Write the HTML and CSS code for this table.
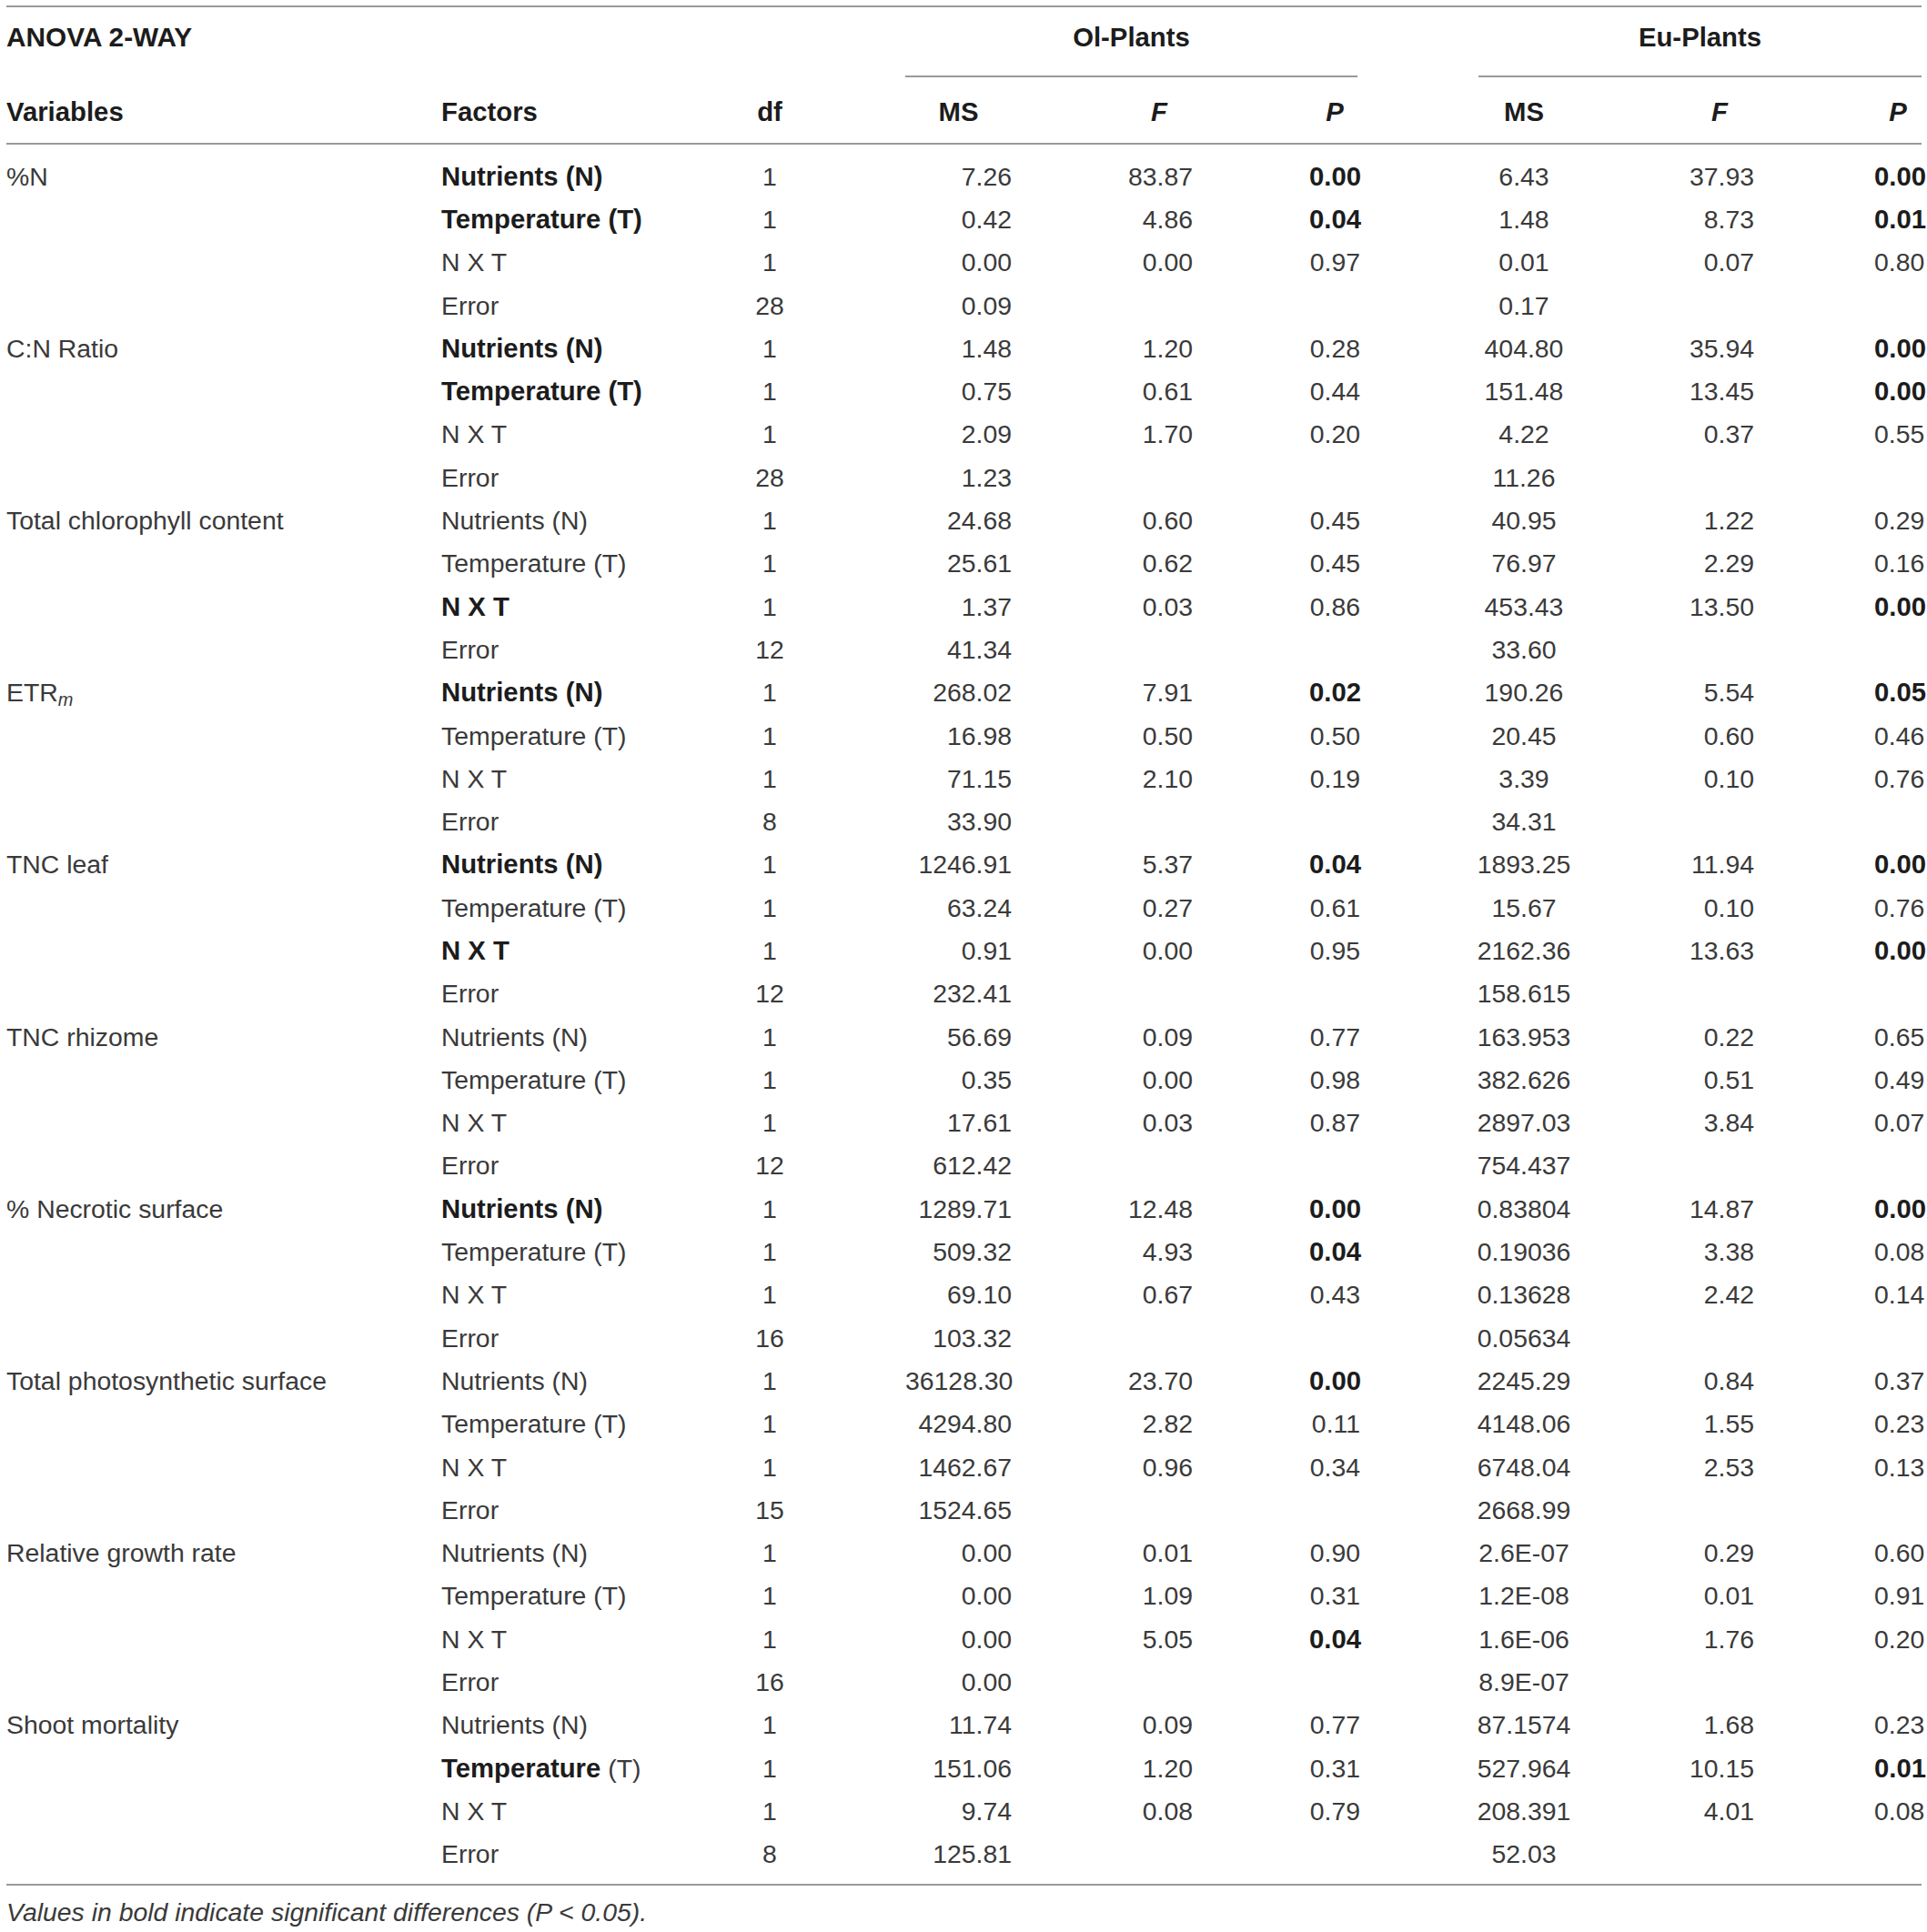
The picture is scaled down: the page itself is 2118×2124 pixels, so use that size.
FILE: index.html
```html
<!DOCTYPE html>
<html lang="en">
<head>
    <meta charset="UTF-8">
    <meta name="viewport" content="width=device-width, initial-scale=1.0">
    <title>ANOVA 2-way</title>
    <link rel="stylesheet" href="styles.css">
</head>
<body>
    <div class="table">
        <div class="head1">
            <b class="title">ANOVA 2-WAY</b>
            <span></span>
            <span></span>
            <div class="group ol"><b>Ol-Plants</b></div>
            <div class="group eu"><b>Eu-Plants</b></div>
        </div>
        <div class="head2">
            <b>Variables</b>
            <b>Factors</b>
            <b>df</b>
            <b>MS</b>
            <b><i>F</i></b>
            <b><i>P</i></b>
            <b>MS</b>
            <b><i>F</i></b>
            <b><i>P</i></b>
        </div>
        <div class="body">
            <div class="row"><span>%N</span><b>Nutrients (N)</b><span>1</span><span>7.26</span><span>83.87</span><b>0.00</b><span>6.43</span><span>37.93</span><b>0.00</b></div>
            <div class="row"><span></span><b>Temperature (T)</b><span>1</span><span>0.42</span><span>4.86</span><b>0.04</b><span>1.48</span><span>8.73</span><b>0.01</b></div>
            <div class="row"><span></span><span>N X T</span><span>1</span><span>0.00</span><span>0.00</span><span>0.97</span><span>0.01</span><span>0.07</span><span>0.80</span></div>
            <div class="row"><span></span><span>Error</span><span>28</span><span>0.09</span><span></span><span></span><span>0.17</span><span></span><span></span></div>

            <div class="row"><span>C:N Ratio</span><b>Nutrients (N)</b><span>1</span><span>1.48</span><span>1.20</span><span>0.28</span><span>404.80</span><span>35.94</span><b>0.00</b></div>
            <div class="row"><span></span><b>Temperature (T)</b><span>1</span><span>0.75</span><span>0.61</span><span>0.44</span><span>151.48</span><span>13.45</span><b>0.00</b></div>
            <div class="row"><span></span><span>N X T</span><span>1</span><span>2.09</span><span>1.70</span><span>0.20</span><span>4.22</span><span>0.37</span><span>0.55</span></div>
            <div class="row"><span></span><span>Error</span><span>28</span><span>1.23</span><span></span><span></span><span>11.26</span><span></span><span></span></div>

            <div class="row"><span>Total chlorophyll content</span><span>Nutrients (N)</span><span>1</span><span>24.68</span><span>0.60</span><span>0.45</span><span>40.95</span><span>1.22</span><span>0.29</span></div>
            <div class="row"><span></span><span>Temperature (T)</span><span>1</span><span>25.61</span><span>0.62</span><span>0.45</span><span>76.97</span><span>2.29</span><span>0.16</span></div>
            <div class="row"><span></span><b>N X T</b><span>1</span><span>1.37</span><span>0.03</span><span>0.86</span><span>453.43</span><span>13.50</span><b>0.00</b></div>
            <div class="row"><span></span><span>Error</span><span>12</span><span>41.34</span><span></span><span></span><span>33.60</span><span></span><span></span></div>

            <div class="row"><span>ETR<sub><i>m</i></sub></span><b>Nutrients (N)</b><span>1</span><span>268.02</span><span>7.91</span><b>0.02</b><span>190.26</span><span>5.54</span><b>0.05</b></div>
            <div class="row"><span></span><span>Temperature (T)</span><span>1</span><span>16.98</span><span>0.50</span><span>0.50</span><span>20.45</span><span>0.60</span><span>0.46</span></div>
            <div class="row"><span></span><span>N X T</span><span>1</span><span>71.15</span><span>2.10</span><span>0.19</span><span>3.39</span><span>0.10</span><span>0.76</span></div>
            <div class="row"><span></span><span>Error</span><span>8</span><span>33.90</span><span></span><span></span><span>34.31</span><span></span><span></span></div>

            <div class="row"><span>TNC leaf</span><b>Nutrients (N)</b><span>1</span><span>1246.91</span><span>5.37</span><b>0.04</b><span>1893.25</span><span>11.94</span><b>0.00</b></div>
            <div class="row"><span></span><span>Temperature (T)</span><span>1</span><span>63.24</span><span>0.27</span><span>0.61</span><span>15.67</span><span>0.10</span><span>0.76</span></div>
            <div class="row"><span></span><b>N X T</b><span>1</span><span>0.91</span><span>0.00</span><span>0.95</span><span>2162.36</span><span>13.63</span><b>0.00</b></div>
            <div class="row"><span></span><span>Error</span><span>12</span><span>232.41</span><span></span><span></span><span>158.615</span><span></span><span></span></div>

            <div class="row"><span>TNC rhizome</span><span>Nutrients (N)</span><span>1</span><span>56.69</span><span>0.09</span><span>0.77</span><span>163.953</span><span>0.22</span><span>0.65</span></div>
            <div class="row"><span></span><span>Temperature (T)</span><span>1</span><span>0.35</span><span>0.00</span><span>0.98</span><span>382.626</span><span>0.51</span><span>0.49</span></div>
            <div class="row"><span></span><span>N X T</span><span>1</span><span>17.61</span><span>0.03</span><span>0.87</span><span>2897.03</span><span>3.84</span><span>0.07</span></div>
            <div class="row"><span></span><span>Error</span><span>12</span><span>612.42</span><span></span><span></span><span>754.437</span><span></span><span></span></div>

            <div class="row"><span>% Necrotic surface</span><b>Nutrients (N)</b><span>1</span><span>1289.71</span><span>12.48</span><b>0.00</b><span>0.83804</span><span>14.87</span><b>0.00</b></div>
            <div class="row"><span></span><span>Temperature (T)</span><span>1</span><span>509.32</span><span>4.93</span><b>0.04</b><span>0.19036</span><span>3.38</span><span>0.08</span></div>
            <div class="row"><span></span><span>N X T</span><span>1</span><span>69.10</span><span>0.67</span><span>0.43</span><span>0.13628</span><span>2.42</span><span>0.14</span></div>
            <div class="row"><span></span><span>Error</span><span>16</span><span>103.32</span><span></span><span></span><span>0.05634</span><span></span><span></span></div>

            <div class="row"><span>Total photosynthetic surface</span><span>Nutrients (N)</span><span>1</span><span>36128.30</span><span>23.70</span><b>0.00</b><span>2245.29</span><span>0.84</span><span>0.37</span></div>
            <div class="row"><span></span><span>Temperature (T)</span><span>1</span><span>4294.80</span><span>2.82</span><span>0.11</span><span>4148.06</span><span>1.55</span><span>0.23</span></div>
            <div class="row"><span></span><span>N X T</span><span>1</span><span>1462.67</span><span>0.96</span><span>0.34</span><span>6748.04</span><span>2.53</span><span>0.13</span></div>
            <div class="row"><span></span><span>Error</span><span>15</span><span>1524.65</span><span></span><span></span><span>2668.99</span><span></span><span></span></div>

            <div class="row"><span>Relative growth rate</span><span>Nutrients (N)</span><span>1</span><span>0.00</span><span>0.01</span><span>0.90</span><span>2.6E-07</span><span>0.29</span><span>0.60</span></div>
            <div class="row"><span></span><span>Temperature (T)</span><span>1</span><span>0.00</span><span>1.09</span><span>0.31</span><span>1.2E-08</span><span>0.01</span><span>0.91</span></div>
            <div class="row"><span></span><span>N X T</span><span>1</span><span>0.00</span><span>5.05</span><b>0.04</b><span>1.6E-06</span><span>1.76</span><span>0.20</span></div>
            <div class="row"><span></span><span>Error</span><span>16</span><span>0.00</span><span></span><span></span><span>8.9E-07</span><span></span><span></span></div>

            <div class="row"><span>Shoot mortality</span><span>Nutrients (N)</span><span>1</span><span>11.74</span><span>0.09</span><span>0.77</span><span>87.1574</span><span>1.68</span><span>0.23</span></div>
            <div class="row"><span></span><span><b>Temperature</b> (T)</span><span>1</span><span>151.06</span><span>1.20</span><span>0.31</span><span>527.964</span><span>10.15</span><b>0.01</b></div>
            <div class="row"><span></span><span>N X T</span><span>1</span><span>9.74</span><span>0.08</span><span>0.79</span><span>208.391</span><span>4.01</span><span>0.08</span></div>
            <div class="row"><span></span><span>Error</span><span>8</span><span>125.81</span><span></span><span></span><span>52.03</span><span></span><span></span></div>
        </div>
        <p class="note">Values in bold indicate significant differences (<i>P</i> &lt; 0.05).</p>
    </div>
</body>
</html>
```

FILE: styles.css
```css
body {
    margin: 0;
    padding: 6px 6px 0 7px;
    background: #fff;
    color: #3a3a3a;
    font-family: "Liberation Sans", Arial, sans-serif;
    font-size: 28.4px;
}
b {
    color: #1c1c1c;
    font-size: 29.3px;
}
.table {
    width: 2105px;
    border-top: 2px solid #9a9a9a;
}
.head1,
.head2,
.row {
    display: grid;
    grid-template-columns: 478px 305px 112px 210px 199px 184px 232px 201px 184px;
}
.head1 > *,
.head2 > * {
    line-height: 36px;
}
.head1 > * {
    padding: 15px 0 24px;
}
.head1 .title {
    font-size: 29.8px;
}
.group {
    grid-column: span 3;
    padding: 15px 0 0;
}
.group b {
    display: block;
    padding-bottom: 24px;
    text-align: center;
    border-bottom: 2px solid #9a9a9a;
}
.group.ol b {
    margin: 0 3px 0 93px;
}
.group.eu b {
    margin-left: 130px;
}
.head2 {
    padding: 20px 0 16px;
    border-bottom: 2px solid #9a9a9a;
}
.head2 > :nth-child(n+3) {
    text-align: center;
}
.head2 > :nth-child(4),
.row > :nth-child(4) {
    padding-left: 93px;
}
.head2 > :nth-child(5),
.row > :nth-child(5) {
    padding-left: 125px;
}
.head2 > :nth-child(6),
.row > :nth-child(6) {
    padding-left: 128px;
}
.head2 > :nth-child(7),
.row > :nth-child(7) {
    padding-left: 128px;
}
.head2 > :nth-child(8),
.row > :nth-child(8) {
    padding-left: 125px;
}
.head2 > :nth-child(9),
.row > :nth-child(9) {
    padding-left: 132px;
}
.body {
    padding: 11px 0 9px;
    border-bottom: 2px solid #9a9a9a;
}
.row {
    height: 47.3px;
    align-items: center;
    line-height: 36px;
    white-space: nowrap;
}
.row > :nth-child(3),
.row > :nth-child(7) {
    text-align: center;
}
.row > :nth-child(4),
.row > :nth-child(5),
.row > :nth-child(6),
.row > :nth-child(8),
.row > :nth-child(9) {
    text-align: right;
}
sub {
    font-size: 20px;
    vertical-align: -5px;
    line-height: 0;
}
.note {
    margin: 0;
    padding-top: 11px;
    line-height: 36px;
    font-style: italic;
}
```
